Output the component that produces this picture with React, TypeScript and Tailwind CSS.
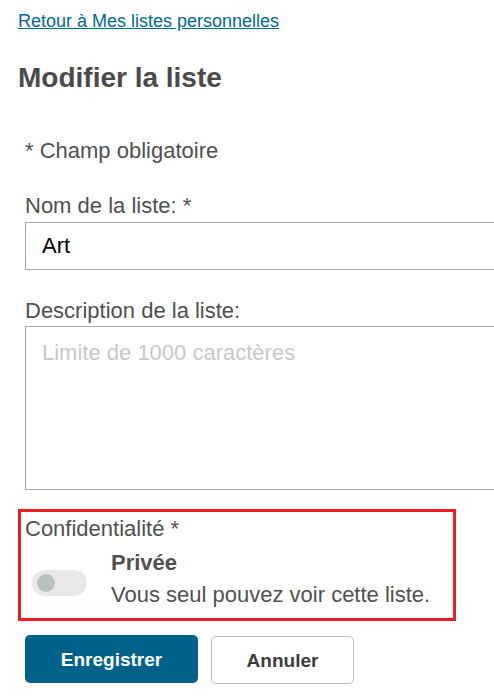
function Toggle() {
  return (
    <div className="ml-[7px] mt-[20px] flex h-[26px] w-[55px] shrink-0 items-center rounded-full bg-[#e8e8e8] pl-[5px]">
      <div className="h-[18px] w-[18px] rounded-full bg-[#b9c1bc]" />
    </div>
  );
}

export default function App() {
  return (
    <div className="min-h-[698px] w-[494px] overflow-hidden bg-white pl-[18px] pt-[11px] font-['Liberation_Sans',Arial,sans-serif]">
      <a
        href="#"
        className="block text-[18px] leading-[21px] text-[#00698f] underline"
      >
        Retour à Mes listes personnelles
      </a>
      <h1 className="mt-[30px] text-[28px] font-bold leading-[32px] text-[#4a4a4a]">
        Modifier la liste
      </h1>

      <form className="mt-[44px] pl-[7px] text-[22px] leading-[25px] text-[#505050]">
        <p>* Champ obligatoire</p>

        <label className="mt-[30px] block">Nom de la liste: *</label>
        <input
          type="text"
          defaultValue="Art"
          className="mt-[4px] block h-[48px] w-[520px] border border-[#aaaaaa] px-4 text-[22px] text-black outline-none"
        />

        <label className="mt-[28px] block">Description de la liste:</label>
        <textarea
          placeholder="Limite de 1000 caractères"
          className="mt-[3px] block h-[164px] w-[520px] resize-none border border-[#aaaaaa] px-4 pt-[13px] text-[22px] leading-[25px] text-black outline-none placeholder:text-[#c8c8c8]"
        />

        <div className="-ml-[7px] mt-[19px] w-[438px] border-[3px] border-[#ed1c24] px-[4px] pb-[11px] pt-[4px]">
          <div>Confidentialité *</div>
          <div className="mt-[9px] flex items-start">
            <Toggle />
            <div className="ml-[24px]">
              <div className="font-bold">Privée</div>
              <div className="mt-[7px]">Vous seul pouvez voir cette liste.</div>
            </div>
          </div>
        </div>

        <div className="mt-[14px] flex items-start gap-[13px]">
          <button
            type="button"
            className="h-[48px] w-[173px] rounded-[5px] bg-[#00628a] text-[19px] font-bold text-white"
          >
            Enregistrer
          </button>
          <button
            type="button"
            className="mt-[1px] h-[48px] w-[143px] rounded-[5px] border border-[#bbbbbb] bg-white text-[19px] font-bold text-[#3d3d3d]"
          >
            Annuler
          </button>
        </div>
      </form>
    </div>
  );
}
